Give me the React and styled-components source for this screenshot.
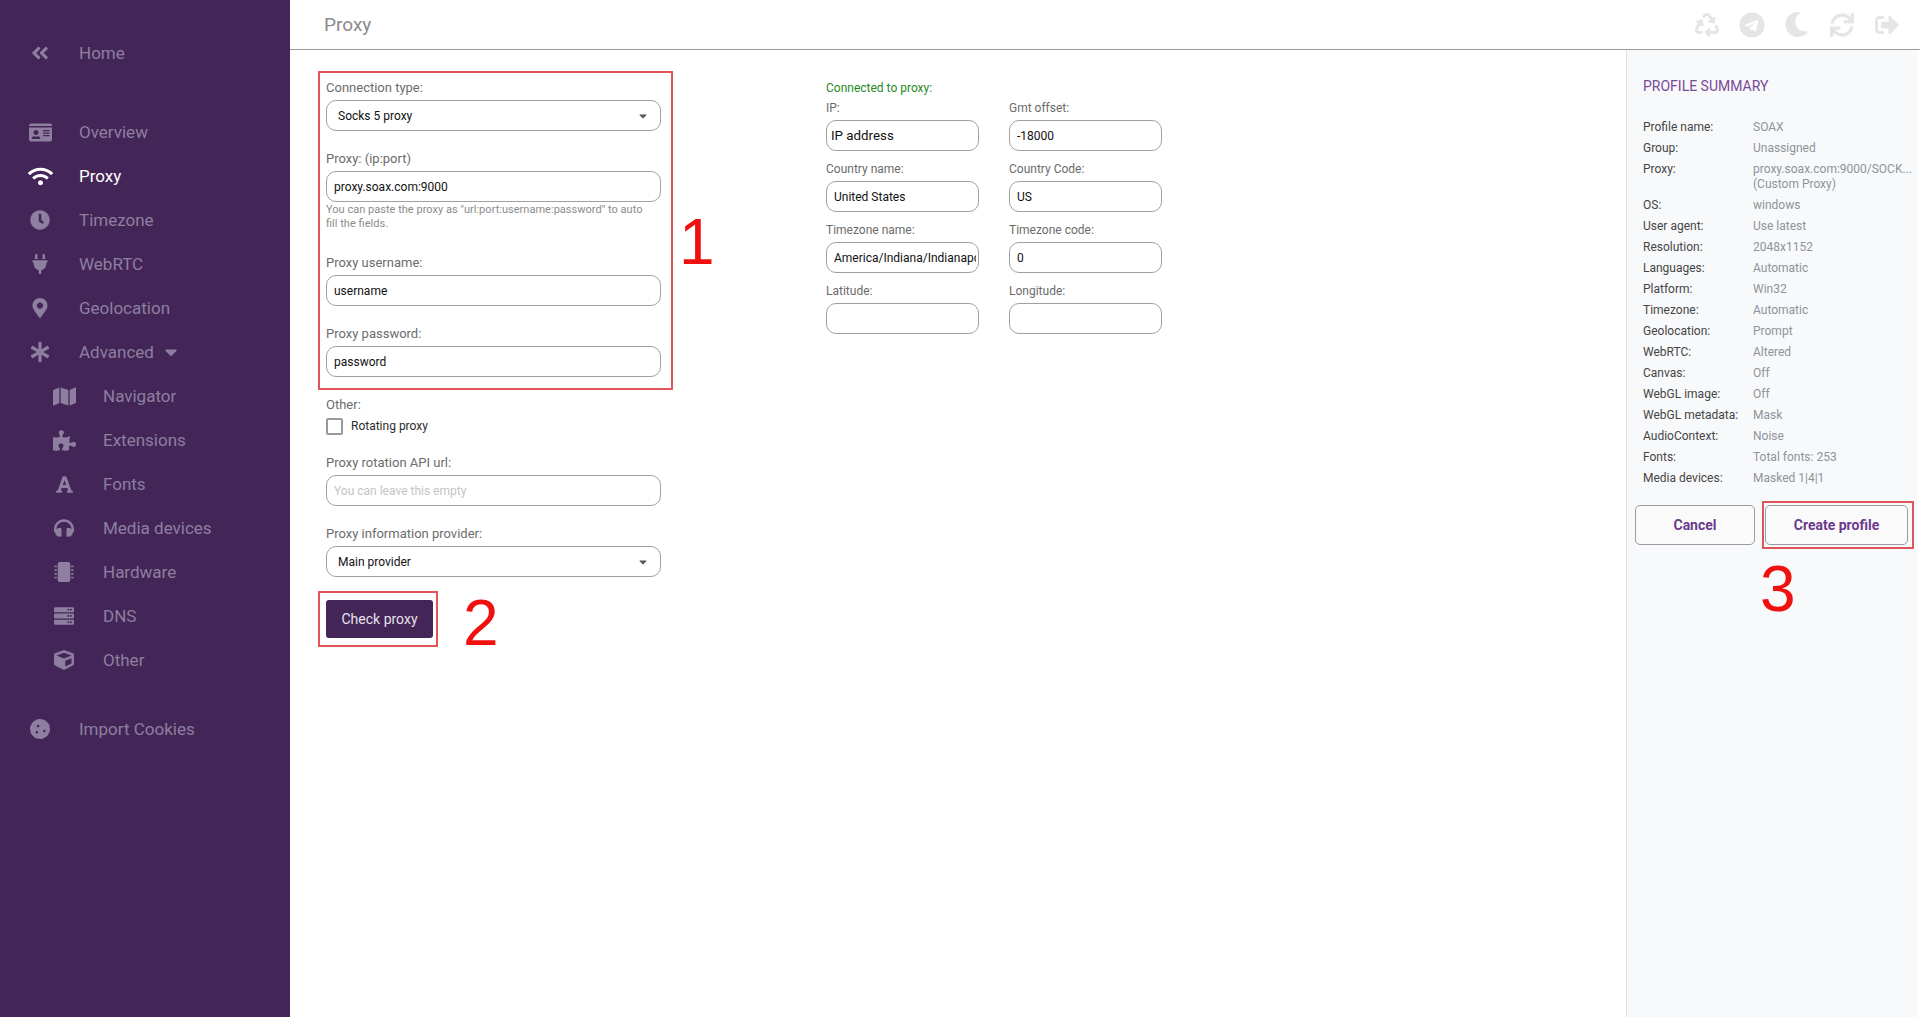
import React from 'react';
import styled, { createGlobalStyle } from 'styled-components';
import {
  FaAngleDoubleLeft,
  FaIdCard,
  FaWifi,
  FaClock,
  FaPlug,
  FaMapMarkerAlt,
  FaAsterisk,
  FaMap,
  FaPuzzlePiece,
  FaFont,
  FaHeadphones,
  FaMicrochip,
  FaServer,
  FaCube,
  FaCookie,
  FaCaretDown,
  FaRecycle,
  FaTelegram,
  FaMoon,
  FaSync,
  FaSignOutAlt,
} from 'react-icons/fa';

const GlobalStyle = createGlobalStyle`
  html, body {
    margin: 0;
    height: 100%;
    background: #fff;
    font-family: Roboto, "Liberation Sans", sans-serif;
  }
  * {
    box-sizing: border-box;
  }
`;

const NAV_ITEMS = [
  { label: 'Overview', icon: FaIdCard, size: 23 },
  { label: 'Proxy', icon: FaWifi, size: 25, active: true },
  { label: 'Timezone', icon: FaClock, size: 20 },
  { label: 'WebRTC', icon: FaPlug, size: 20 },
  { label: 'Geolocation', icon: FaMapMarkerAlt, size: 20 },
];

const SUB_ITEMS = [
  { label: 'Navigator', icon: FaMap, size: 23 },
  { label: 'Extensions', icon: FaPuzzlePiece, size: 23 },
  { label: 'Fonts', icon: FaFont, size: 19 },
  { label: 'Media devices', icon: FaHeadphones, size: 20 },
  { label: 'Hardware', icon: FaMicrochip, size: 20 },
  { label: 'DNS', icon: FaServer, size: 20 },
  { label: 'Other', icon: FaCube, size: 20 },
];

const SUMMARY = [
  ['Profile name:', 'SOAX'],
  ['Group:', 'Unassigned'],
  ['Proxy:', 'proxy.soax.com:9000/SOCK...', '(Custom Proxy)'],
  ['OS:', 'windows'],
  ['User agent:', 'Use latest'],
  ['Resolution:', '2048x1152'],
  ['Languages:', 'Automatic'],
  ['Platform:', 'Win32'],
  ['Timezone:', 'Automatic'],
  ['Geolocation:', 'Prompt'],
  ['WebRTC:', 'Altered'],
  ['Canvas:', 'Off'],
  ['WebGL image:', 'Off'],
  ['WebGL metadata:', 'Mask'],
  ['AudioContext:', 'Noise'],
  ['Fonts:', 'Total fonts: 253'],
  ['Media devices:', 'Masked 1|4|1'],
];

const CONNECTION = [
  ['IP:', 'IP address', true],
  ['Gmt offset:', '-18000'],
  ['Country name:', 'United States'],
  ['Country Code:', 'US'],
  ['Timezone name:', 'America/Indiana/Indianapolis'],
  ['Timezone code:', '0'],
  ['Latitude:', ''],
  ['Longitude:', ''],
];

const NavEntry = ({ item, sub }) => {
  const Icon = item.icon;
  return (
    <NavItem $active={item.active} $sub={sub}>
      <IconSlot>
        <Icon size={item.size} />
      </IconSlot>
      {item.label}
    </NavItem>
  );
};

const Field = ({ label, value, placeholder, help }) => (
  <FieldWrap>
    <Label>{label}</Label>
    <TextInput readOnly value={value} placeholder={placeholder} />
    {help && <Help>{help}</Help>}
  </FieldWrap>
);

const SelectField = ({ label, value }) => (
  <FieldWrap>
    <Label>{label}</Label>
    <SelectBox>
      {value}
      <FaCaretDown size={12} color="#555" />
    </SelectBox>
  </FieldWrap>
);

const App = () => (
  <>
    <GlobalStyle />
    <Page>
      <Sidebar>
        <NavEntry item={{ label: 'Home', icon: FaAngleDoubleLeft, size: 20 }} />
        <NavGroup>
          {NAV_ITEMS.map((item) => (
            <NavEntry key={item.label} item={item} />
          ))}
          <NavItem>
            <IconSlot>
              <FaAsterisk size={20} />
            </IconSlot>
            Advanced
            <Caret>
              <FaCaretDown size={20} />
            </Caret>
          </NavItem>
          {SUB_ITEMS.map((item) => (
            <NavEntry key={item.label} item={item} sub />
          ))}
        </NavGroup>
        <CookieGroup>
          <NavEntry item={{ label: 'Import Cookies', icon: FaCookie, size: 20 }} />
        </CookieGroup>
      </Sidebar>

      <Main>
        <TopBar>
          <Title>Proxy</Title>
          <TopIcons>
            <TopIcon><FaRecycle size={24} /></TopIcon>
            <TopIcon><FaTelegram size={26} /></TopIcon>
            <TopIcon><FaMoon size={25} /></TopIcon>
            <TopIcon><FaSync size={24} /></TopIcon>
            <TopIcon><FaSignOutAlt size={24} /></TopIcon>
          </TopIcons>
        </TopBar>

        <Body>
          <Content>
            <FormColumn>
              <Annotated>
                <SelectField label="Connection type:" value="Socks 5 proxy" />
                <Field
                  label="Proxy: (ip:port)"
                  value="proxy.soax.com:9000"
                  help={'You can paste the proxy as "url:port:username:password" to auto fill the fields.'}
                />
                <Field label="Proxy username:" value="username" />
                <Field label="Proxy password:" value="password" />
                <MarkBox $top={-9} $left={-8} $right={-12} $bottom={-13} />
                <MarkNumber $top={126} $left={353}>1</MarkNumber>
              </Annotated>

              <FieldWrap>
                <Label>Other:</Label>
                <CheckRow>
                  <CheckBox />
                  Rotating proxy
                </CheckRow>
              </FieldWrap>
              <Field label="Proxy rotation API url:" value="" placeholder="You can leave this empty" />
              <SelectField label="Proxy information provider:" value="Main provider" />

              <Annotated>
                <CheckButton>Check proxy</CheckButton>
                <MarkBox $top={-9} $left={-8} $right={223} $bottom={-9} />
                <MarkNumber $top={-13} $left={137}>2</MarkNumber>
              </Annotated>
            </FormColumn>

            <ConnectionColumn>
              <Connected>Connected to proxy:</Connected>
              <ConnectionGrid>
                {CONNECTION.map(([label, value, big]) => (
                  <div key={label}>
                    <Label $small>{label}</Label>
                    <TextInput readOnly value={value} $big={big} />
                  </div>
                ))}
              </ConnectionGrid>
            </ConnectionColumn>
          </Content>

          <Summary>
            <SummaryTitle>PROFILE SUMMARY</SummaryTitle>
            <SummaryList>
              {SUMMARY.map(([name, value, extra]) => (
                <SummaryRow key={name}>
                  <SummaryName>{name}</SummaryName>
                  <SummaryValue>
                    {value}
                    {extra && <br />}
                    {extra}
                  </SummaryValue>
                </SummaryRow>
              ))}
            </SummaryList>
            <SummaryActions>
              <OutlineButton $width={120}>Cancel</OutlineButton>
              <Annotated>
                <OutlineButton $width={143}>Create profile</OutlineButton>
                <MarkBox $top={-4} $left={-3} $right={-6} $bottom={-4} />
                <MarkNumber $top={48} $left={-5}>3</MarkNumber>
              </Annotated>
            </SummaryActions>
          </Summary>
        </Body>
      </Main>
    </Page>
  </>
);

const Page = styled.div`
  display: flex;
  height: 1017px;
  overflow: hidden;
`;

const Sidebar = styled.aside`
  flex: 0 0 290px;
  padding-top: 31px;
  background: #432657;
`;

const NavGroup = styled.div`
  margin-top: 35px;
`;

const CookieGroup = styled.div`
  margin-top: 25px;
`;

const NavItem = styled.div`
  display: flex;
  align-items: center;
  height: 44px;
  padding-left: ${(p) => (p.$sub ? '44px' : '20px')};
  font-size: 17px;
  color: ${(p) => (p.$active ? '#ffffff' : '#8e7ea0')};
`;

const IconSlot = styled.span`
  display: flex;
  justify-content: center;
  flex: 0 0 40px;
  margin-right: 19px;
`;

const Caret = styled.span`
  display: flex;
  margin-left: 7px;
`;

const Main = styled.main`
  flex: 1;
  display: flex;
  flex-direction: column;
  min-width: 0;
`;

const TopBar = styled.header`
  flex: 0 0 50px;
  display: flex;
  align-items: center;
  justify-content: space-between;
  padding: 0 11px 0 34px;
  border-bottom: 1px solid #9a9a9a;
`;

const Title = styled.h1`
  margin: 0;
  font-size: 19px;
  font-weight: 400;
  color: #8a8a8a;
`;

const TopIcons = styled.div`
  display: flex;
  align-items: center;
  color: #e3e5e6;
`;

const TopIcon = styled.span`
  display: flex;
  justify-content: center;
  width: 45px;
`;

const Body = styled.div`
  flex: 1;
  display: flex;
  min-height: 0;
`;

const Content = styled.div`
  flex: 1;
  display: flex;
  gap: 165px;
  padding: 30px 0 0 36px;
`;

const FormColumn = styled.div`
  width: 335px;
`;

const Annotated = styled.div`
  position: relative;
`;

const MarkBox = styled.div`
  position: absolute;
  top: ${(p) => p.$top}px;
  left: ${(p) => p.$left}px;
  right: ${(p) => p.$right}px;
  bottom: ${(p) => p.$bottom}px;
  border: 2px solid #e0555a;
  pointer-events: none;
`;

const MarkNumber = styled.span`
  position: absolute;
  top: ${(p) => p.$top}px;
  left: ${(p) => p.$left}px;
  font-family: 'Liberation Sans', sans-serif;
  font-size: 64px;
  line-height: 72px;
  color: #f01010;
`;

const FieldWrap = styled.div`
  margin-bottom: 20px;
`;

const Label = styled.label`
  display: block;
  height: 16px;
  margin-bottom: 4px;
  font-size: ${(p) => (p.$small ? '12px' : '13px')};
  line-height: 16px;
  color: #6c6c6c;
`;

const TextInput = styled.input`
  display: block;
  width: 100%;
  height: 31px;
  padding: 0 2px 0 ${(p) => (p.$big ? '4px' : '7px')};
  border: 1px solid #a0a0a0;
  border-radius: 10px;
  outline: none;
  background: #fff;
  font-family: inherit;
  font-size: ${(p) => (p.$big ? '13.33px' : '12px')};
  color: #111;

  &::placeholder {
    color: #c4c4c4;
  }
`;

const Help = styled.div`
  max-width: 325px;
  height: 33px;
  padding-top: 1px;
  font-size: 11.05px;
  line-height: 14px;
  color: #8c8c8c;
`;

const SelectBox = styled.div`
  display: flex;
  align-items: center;
  justify-content: space-between;
  height: 31px;
  padding: 0 11px;
  border: 1px solid #a0a0a0;
  border-radius: 10px;
  font-size: 12px;
  color: #111;
`;

const CheckRow = styled.div`
  display: flex;
  align-items: center;
  gap: 8px;
  height: 18px;
  font-size: 12px;
  color: #2c2c2c;
`;

const CheckBox = styled.span`
  width: 17px;
  height: 17px;
  border: 2px solid #9a9a9a;
  border-radius: 2px;
`;

const CheckButton = styled.button`
  display: block;
  width: 107px;
  height: 38px;
  margin-top: 23px;
  border: 0;
  border-radius: 3px;
  background: #432657;
  font-family: inherit;
  font-size: 14px;
  color: #e8e2ee;
`;

const ConnectionColumn = styled.div`
  width: 335px;
`;

const Connected = styled.div`
  height: 16px;
  margin-bottom: 4px;
  font-size: 12px;
  line-height: 16px;
  color: #1f8a1f;
`;

const ConnectionGrid = styled.div`
  display: grid;
  grid-template-columns: 153px 153px;
  column-gap: 30px;
  row-gap: 10px;
`;

const Summary = styled.aside`
  flex: 0 0 292px;
  margin-right: 2px;
  padding: 28px 0 0 16px;
  border-left: 1px solid #e2e2e2;
  background: #f8f9fa;
`;

const SummaryTitle = styled.h2`
  margin: 0 0 26px;
  height: 16px;
  font-size: 14px;
  font-weight: 400;
  line-height: 16px;
  color: #7a4a98;
`;

const SummaryList = styled.div`
  display: flex;
  flex-direction: column;
  gap: 6.5px;
`;

const SummaryRow = styled.div`
  display: flex;
  font-size: 12px;
  line-height: 14.5px;
`;

const SummaryName = styled.span`
  flex: 0 0 110px;
  color: #454545;
`;

const SummaryValue = styled.span`
  white-space: nowrap;
  color: #8d949a;
`;

const SummaryActions = styled.div`
  display: flex;
  gap: 10px;
  margin: 20px 0 0 -8px;
`;

const OutlineButton = styled.button`
  display: block;
  width: ${(p) => p.$width}px;
  height: 40px;
  border: 1px solid #9a9aa0;
  border-radius: 5px;
  background: #fafafa;
  font-family: inherit;
  font-size: 14px;
  font-weight: 700;
  color: #6b3a8c;
`;

export default App;
